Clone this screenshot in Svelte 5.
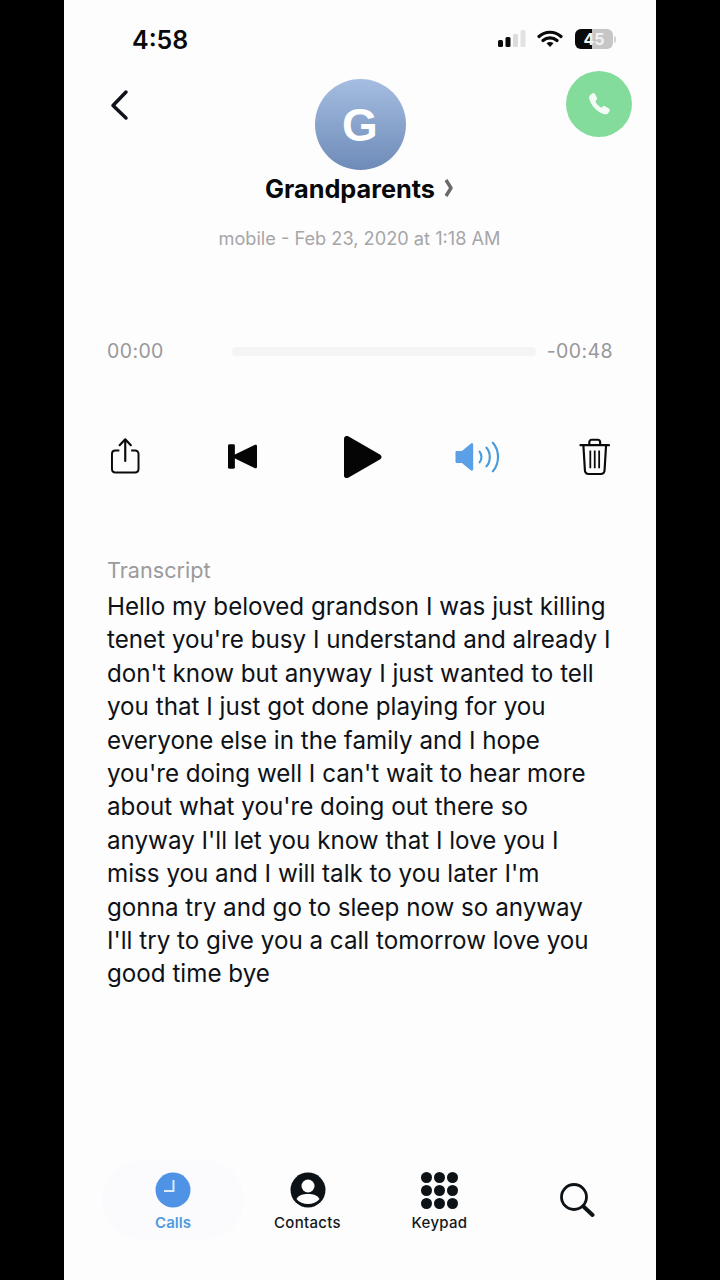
<script>
	const lines = [
		'Hello my beloved grandson I was just killing',
		"tenet you're busy I understand and already I",
		"don't know but anyway I just wanted to tell",
		'you that I just got done playing for you',
		'everyone else in the family and I hope',
		"you're doing well I can't wait to hear more",
		"about what you're doing out there so",
		"anyway I'll let you know that I love you I",
		"miss you and I will talk to you later I'm",
		'gonna try and go to sleep now so anyway',
		"I'll try to give you a call tomorrow love you",
		'good time bye'
	];
</script>

<div class="page">
	<div class="phone">
		<div class="status">
			<span class="time">4:58</span>
			<div class="status-icons">
				<svg width="30" height="20" viewBox="0 0 30 20">
					<rect x="1" y="11" width="5" height="7" rx="1.5" fill="#0a0a0a" />
					<rect x="8.500" y="8" width="5" height="10" rx="1.500" fill="#0a0a0a" />
					<rect x="16" y="5" width="5" height="13" rx="1.500" fill="#dcdcdc" />
					<rect x="23.500" y="1" width="5" height="17" rx="1.500" fill="#e2e2e2" />
				</svg>
				<svg class="wifi" width="26" height="20" viewBox="0 0 26 20">
					<path d="M2 7.500C8 1.800 18 1.800 24 7.500M6 11.500C10 8 16 8 20 11.500" fill="none" stroke="#0a0a0a" stroke-width="3.200" stroke-linecap="round" />
					<path d="M9.500 14.200C11.500 12.600 14.500 12.600 16.500 14.200L13 18Z" fill="#0a0a0a" />
				</svg>
				<div class="battery"><span class="fill"></span><span class="pct">45</span></div>
				<span class="nub"></span>
			</div>
		</div>

		<div class="head">
			<button class="back" aria-label="Back">
				<svg width="22" height="32" viewBox="0 0 22 32">
					<path d="M18 3L5 16.500L18 29" fill="none" stroke="#10141a" stroke-width="3.500" stroke-linecap="round" stroke-linejoin="round" />
				</svg>
			</button>
			<div class="avatar">G</div>
			<button class="call" aria-label="Call">
				<svg width="28" height="28" viewBox="0 0 24 24">
					<path d="M6.600 2.800C7.400 2.400 8.200 2.700 8.600 3.500L10.200 6.700C10.500 7.400 10.400 8.100 9.900 8.600L8.900 9.700C9.700 11.900 11.800 14.300 14.100 15.200L15.300 14.200C15.900 13.700 16.600 13.700 17.200 14L20.400 15.800C21.200 16.300 21.500 17.200 21 18L20.100 19.500C19.400 20.600 18.200 21.100 16.900 20.800C10.900 19.300 5 13.200 3.600 7.200C3.300 6 3.700 4.800 4.800 4Z" fill="#f4fbf6" />
				</svg>
			</button>
		</div>

		<div class="name-row">
			<span class="name">Grandparents</span>
			<svg width="10" height="20" viewBox="0 0 10 20">
				<path d="M2 2L7 10L2 18" fill="none" stroke="#6a6a6a" stroke-width="3.400" stroke-linejoin="round" />
			</svg>
		</div>
		<div class="meta">mobile - Feb 23, 2020 at 1:18 AM</div>

		<div class="progress">
			<span>00:00</span>
			<div class="track"></div>
			<span>-00:48</span>
		</div>

		<div class="controls">
			<svg class="share" width="32" height="38" viewBox="0 0 32 38">
				<path d="M9.500 13.500H5.500C3.300 13.500 2 14.800 2 17V32C2 34.500 3.300 35.800 5.500 35.800H25.500C27.700 35.800 29 34.500 29 32V17C29 14.800 27.700 13.500 25.500 13.500H21.500" fill="none" stroke="#0a0a0a" stroke-width="2" />
				<path d="M15.500 24V3M9.800 8L15.500 2L21.200 8" fill="none" stroke="#0a0a0a" stroke-width="2.200" stroke-linecap="round" stroke-linejoin="round" />
			</svg>
			<svg class="skip" width="30" height="26" viewBox="0 0 30 26">
				<rect x="0" y="0" width="7" height="25" rx="1.500" fill="#050505" />
				<path d="M28 0.500C29 0.500 29.500 1 29.500 2V23C29.500 24 29 24.500 28 24.500C27.600 24.500 27.300 24.400 27 24.200L6 14C5 13.200 5 11.800 6 11L27 0.800C27.300 0.600 27.600 0.500 28 0.500Z" fill="#050505" />
			</svg>
			<svg class="play" width="40" height="44" viewBox="0 0 40 44">
				<path d="M1 3.500C1 1 3.200 -0.200 5.300 1L37.500 19.500C39.700 20.800 39.700 23.200 37.500 24.500L5.300 43C3.200 44.200 1 43 1 40.500Z" fill="#050505" />
			</svg>
			<svg class="speaker" width="46" height="32" viewBox="0 0 46 32">
				<path d="M0.500 11.500C0.500 10.500 1 10 2 10H7L16 2.500C17 1.700 18.500 2 18.500 3.500V28.500C18.500 30 17 30.300 16 29.500L7 22H2C1 22 0.500 21.500 0.500 20.500Z" fill="#5b9fe6" />
				<path d="M25 10.500C27.500 13.500 27.500 18.500 25 21.500M32 6.500C36.500 11.500 36.500 20.500 32 25.500M38.500 1.500C45.500 9.500 45.500 22.500 38.500 30.500" fill="none" stroke="#4a9bdc" stroke-width="2.200" stroke-linecap="round" />
			</svg>
			<svg class="trash" width="32" height="38" viewBox="0 0 32 38">
				<path d="M1.500 7H30.500M10.500 6.500V4C10.500 2.500 11.500 1.500 13 1.500H19C20.500 1.500 21.500 2.500 21.500 4V6.500" fill="none" stroke="#0a0a0a" stroke-width="2.200" stroke-linecap="round" />
				<path d="M4.500 7.500L6 32.500C6.100 35 7.500 36.300 10 36.300H22C24.500 36.300 25.900 35 26 32.500L27.500 7.500" fill="none" stroke="#0a0a0a" stroke-width="2.200" />
				<path d="M11.500 12.500V30.500M16 12.500V30.500M20.500 12.500V30.500" fill="none" stroke="#0a0a0a" stroke-width="1.800" />
			</svg>
		</div>

		<div class="transcript">
			<div class="label">Transcript</div>
			{#each lines as line}
				<div class="line">{line}</div>
			{/each}
		</div>

		<nav class="tabs">
			<div class="tab active">
				<svg width="36" height="36" viewBox="0 0 36 36">
					<circle cx="18" cy="18" r="17.500" fill="#4f93e6" />
					<path d="M18.500 8V19H9" fill="none" stroke="#dcebfb" stroke-width="2" />
				</svg>
				<span>Calls</span>
			</div>
			<div class="tab">
				<svg width="36" height="36" viewBox="0 0 36 36">
					<circle cx="18" cy="18" r="17.500" fill="#0c1216" />
					<circle cx="18" cy="14" r="6.500" fill="#fff" />
					<path d="M6.500 27C8.500 23.200 13 22 18 22C23 22 27.500 23.200 29.500 27C26.800 30.200 22.600 32 18 32C13.400 32 9.200 30.200 6.500 27Z" fill="#fff" />
				</svg>
				<span>Contacts</span>
			</div>
			<div class="tab keypad">
				<div class="keys">
					{#each Array(9) as _}
						<i></i>
					{/each}
				</div>
				<span>Keypad</span>
			</div>
			<div class="search">
				<svg width="36" height="36" viewBox="0 0 36 36">
					<circle cx="15" cy="15" r="12.500" fill="none" stroke="#0c1216" stroke-width="2.800" />
					<path d="M24.500 24.500L33.500 33" fill="none" stroke="#0c1216" stroke-width="4" stroke-linecap="round" />
				</svg>
			</div>
		</nav>
	</div>
</div>

<style>
	:global(body) {
		margin: 0;
		background: #000;
	}

	.page {
		width: 720px;
		height: 1280px;
		background: #000;
		display: flex;
		justify-content: center;
		font-family: Inter, "Liberation Sans", sans-serif;
	}

	.phone {
		width: 592px;
		height: 1280px;
		background: #fdfdfe;
		display: flex;
		flex-direction: column;
		overflow: hidden;
	}

	.status {
		display: flex;
		justify-content: space-between;
		align-items: center;
		height: 30px;
		margin-top: 24px;
		padding: 0 40px 0 68px;
	}

	.time {
		margin-top: 2px;
		font-size: 25px;
		font-weight: 600;
		color: #0a0a0a;
	}

	.status-icons {
		display: flex;
		align-items: center;
	}

	.wifi {
		margin-left: 10px;
	}

	.battery {
		position: relative;
		width: 38px;
		height: 20px;
		margin-left: 12px;
		border-radius: 6px;
		background: #c6c6c6;
		overflow: hidden;
	}

	.fill {
		position: absolute;
		left: 0;
		top: 0;
		bottom: 0;
		width: 17px;
		background: #0a0a0a;
	}

	.pct {
		position: relative;
		display: block;
		text-align: center;
		font-size: 16px;
		font-weight: 700;
		line-height: 20px;
		color: #f2f2f2;
	}

	.nub {
		width: 2px;
		height: 7px;
		margin-left: 1px;
		border-radius: 0 2px 2px 0;
		background: #d4d4d4;
	}

	.head {
		display: grid;
		grid-template-columns: 1fr 91px 1fr;
		align-items: start;
		height: 90px;
		margin-top: 28px;
		padding: 0 24px 0 44px;
	}

	button {
		border: 0;
		padding: 0;
		background: none;
		display: flex;
		align-items: center;
		justify-content: center;
	}

	.back {
		width: 22px;
		height: 32px;
		margin-top: 7px;
	}

	.avatar {
		width: 91px;
		height: 91px;
		margin-top: -3px;
		margin-left: -10px;
		border-radius: 50%;
		background: linear-gradient(#a5bde0, #6e8bb8);
		color: #fff;
		font-family: "Liberation Sans", sans-serif;
		font-size: 46px;
		font-weight: 700;
		display: flex;
		align-items: center;
		justify-content: center;
	}

	.call {
		width: 66px;
		height: 66px;
		margin-top: -11px;
		justify-self: end;
		border-radius: 50%;
		background: #83dc9c;
	}

	.name-row {
		display: flex;
		align-items: center;
		justify-content: center;
		gap: 9px;
		height: 34px;
		margin-top: -1px;
		margin-left: -1px;
	}

	.name {
		font-size: 25.300px;
		font-weight: 700;
		color: #07090c;
	}

	.meta {
		margin-top: 21px;
		margin-left: -1px;
		text-align: center;
		font-size: 18.200px;
		line-height: 24px;
		color: #a6a6a8;
	}

	.progress {
		display: flex;
		align-items: center;
		justify-content: space-between;
		height: 26px;
		margin-top: 88px;
		padding: 0 43px;
		font-size: 19.500px;
		color: #98989a;
		letter-spacing: 0.4px;
	}

	.track {
		width: 304px;
		height: 9px;
		margin-left: 58px;
		background: #f5f5f6;
		border-radius: 4px;
	}

	.controls {
		display: flex;
		align-items: center;
		height: 44px;
		margin-top: 71px;
		padding: 0 46px;
	}

	.share {
		margin-top: -2px;
	}

	.skip {
		margin-left: 87px;
	}

	.play {
		margin-left: 85px;
	}

	.speaker {
		margin-left: 73px;
	}

	.trash {
		margin-left: 78px;
	}

	.transcript {
		margin-top: 72px;
		padding: 0 43px;
		font-size: 24.200px;
		line-height: 33.400px;
		color: #0e1217;
	}

	.label {
		font-size: 21.600px;
		line-height: 39px;
		color: #9a9a9c;
	}

	.line {
		white-space: nowrap;
	}

	.tabs {
		display: flex;
		align-items: flex-start;
		margin-top: auto;
		margin-bottom: 40px;
		margin-left: 38px;
	}

	.tab {
		width: 133px;
		height: 80px;
		display: flex;
		flex-direction: column;
		align-items: center;
		padding-top: 12px;
		box-sizing: border-box;
		font-size: 15px;
		font-weight: 500;
		letter-spacing: 0.3px;
		color: #14181c;
	}

	.tab span {
		margin-top: 5px;
		line-height: 20px;
	}

	.tab.active {
		width: 142px;
		margin-right: -3px;
		background: #fbfbfd;
		border-radius: 40px;
		color: #4f9ade;
		font-weight: 600;
		letter-spacing: 0;
	}

	.tab.keypad {
		margin-left: -1px;
		margin-right: 1px;
	}

	.keys {
		width: 37px;
		height: 36px;
		display: grid;
		grid-template-columns: repeat(3, 11px);
		grid-template-rows: repeat(3, 11px);
		gap: 2px;
	}

	.keys i {
		background: #0c1216;
		border-radius: 50%;
	}

	.search {
		margin-top: 22px;
		margin-left: 3px;
		padding-left: 49px;
	}
</style>
